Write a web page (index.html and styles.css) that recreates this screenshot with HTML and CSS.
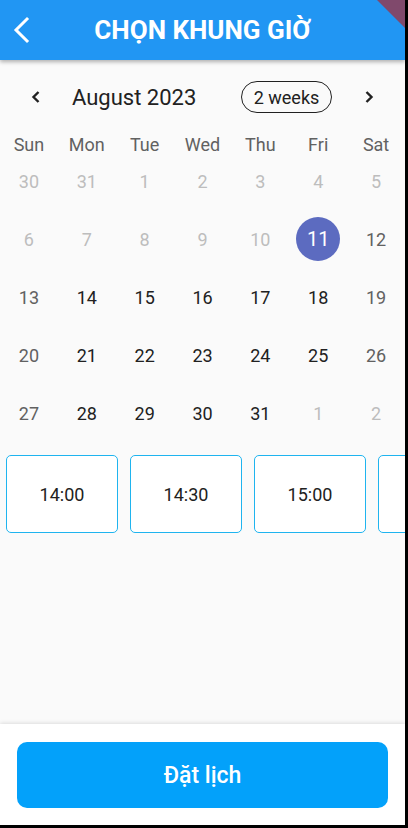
FILE: index.html
```html
<!DOCTYPE html>
<html lang="vi">
<head>
<meta charset="utf-8">
<link rel="stylesheet" href="styles.css">
</head>
<body>
<div class="screen">
  <header class="appbar">
    <svg class="back" width="24" height="28" viewBox="0 0 24 28"><path d="M17 3 L6 14 L17 25" fill="none" stroke="#fff" stroke-width="3" stroke-linecap="square"/></svg>
    <h1 class="title">CHỌN KHUNG GIỜ</h1>
    <span></span>
  </header>
  <div class="banner"></div>

  <div class="cal-head">
    <svg class="chev" width="12" height="14" viewBox="0 0 12 14"><path d="M8.5 2 L3.5 7 L8.5 12" fill="none" stroke="#212121" stroke-width="2.4"/></svg>
    <span class="month">August 2023</span>
    <span class="pill">2 weeks</span>
    <svg class="chev right" width="12" height="14" viewBox="0 0 12 14"><path d="M3.5 2 L8.5 7 L3.5 12" fill="none" stroke="#212121" stroke-width="2.4"/></svg>
  </div>

  <div class="dow">
    <span>Sun</span><span>Mon</span><span>Tue</span><span>Wed</span><span>Thu</span><span>Fri</span><span>Sat</span>
  </div>

  <div class="dates">
    <span class="d off">30</span><span class="d off">31</span><span class="d off">1</span><span class="d off">2</span><span class="d off">3</span><span class="d off">4</span><span class="d off">5</span>
    <span class="d off">6</span><span class="d off">7</span><span class="d off">8</span><span class="d off">9</span><span class="d off">10</span><span class="d"><span class="sel">11</span></span><span class="d we">12</span>
    <span class="d we">13</span><span class="d">14</span><span class="d">15</span><span class="d">16</span><span class="d">17</span><span class="d">18</span><span class="d we">19</span>
    <span class="d we">20</span><span class="d">21</span><span class="d">22</span><span class="d">23</span><span class="d">24</span><span class="d">25</span><span class="d we">26</span>
    <span class="d we">27</span><span class="d">28</span><span class="d">29</span><span class="d">30</span><span class="d">31</span><span class="d off">1</span><span class="d off">2</span>
  </div>

  <div class="slots">
    <div class="slot">14:00</div>
    <div class="slot">14:30</div>
    <div class="slot">15:00</div>
    <div class="slot"></div>
  </div>

  <div class="spacer"></div>

  <footer class="footer">
    <button class="book">Đặt lịch</button>
  </footer>
</div>
</body>
</html>
```

FILE: styles.css
```css
* { box-sizing: border-box; }
html, body { margin: 0; padding: 0; }
body {
  width: 408px;
  height: 828px;
  background: #000;
  font-family: Roboto, "Noto Sans", sans-serif;
  overflow: hidden;
}
.screen {
  position: relative;
  width: 405px;
  height: 825px;
  background: #fafafa;
  display: flex;
  flex-direction: column;
  overflow: hidden;
}
.appbar {
  height: 60px;
  flex: none;
  background: #2196f3;
  display: grid;
  grid-template-columns: 56px 1fr 56px;
  align-items: center;
  box-shadow: 0 2px 4px rgba(0,0,0,0.3);
  position: relative;
  z-index: 2;
}
.back { margin-left: 10px; }
.title {
  margin: 0;
  text-align: center;
  color: #fff;
  font-size: 26px;
  font-weight: 700;
  letter-spacing: 0;
}
.banner {
  position: absolute;
  top: 0;
  right: 0;
  width: 28px;
  height: 28px;
  background: rgba(183,28,28,0.63);
  clip-path: polygon(0 0, 100% 0, 100% 100%);
  z-index: 3;
}
.cal-head {
  margin-top: 20px;
  height: 34px;
  display: flex;
  align-items: center;
  padding: 0 30px;
}
.month {
  margin-left: 30px;
  font-size: 22px;
  color: #212121;
}
.pill {
  margin-left: auto;
  width: 91px;
  height: 32px;
  border: 1px solid #212121;
  border-radius: 16px;
  display: flex;
  align-items: center;
  justify-content: center;
  font-size: 18px;
  color: #212121;
}
.chev.right { margin-left: 31px; }
.dow {
  margin-top: 20px;
  height: 21px;
  display: grid;
  grid-template-columns: repeat(7, 1fr);
  align-items: center;
  text-align: center;
  font-size: 18px;
  color: #616161;
}
.dates {
  display: grid;
  grid-template-columns: repeat(7, 1fr);
  grid-auto-rows: 52px;
  row-gap: 6px;
}
.d {
  display: flex;
  align-items: center;
  justify-content: center;
  font-size: 18px;
  color: #212121;
}
.d.off { color: #bdbdbd; }
.d.we { color: #616161; }
.sel {
  width: 44px;
  height: 44px;
  border-radius: 50%;
  background: #5c6bc0;
  color: #fff;
  display: flex;
  align-items: center;
  justify-content: center;
  font-size: 20px;
}
.slots {
  margin-top: 16px;
  display: flex;
  gap: 12px;
  padding-left: 6px;
  overflow: hidden;
}
.slot {
  flex: none;
  width: 112px;
  height: 78px;
  background: #fff;
  border: 1px solid #1fb4ef;
  border-radius: 5px;
  display: flex;
  align-items: center;
  justify-content: center;
  font-size: 18px;
  color: #212121;
}
.spacer { flex: 1; }
.footer {
  flex: none;
  height: 101px;
  background: #fff;
  box-shadow: 0 -1px 4px rgba(0,0,0,0.12);
  padding: 18px 17px 17px;
}
.book {
  width: 100%;
  height: 66px;
  border: none;
  border-radius: 10px;
  background: #03a1fa;
  color: #fff;
  font-family: Roboto, "Noto Sans", sans-serif;
  font-size: 23px;
  font-weight: 500;
}
```
